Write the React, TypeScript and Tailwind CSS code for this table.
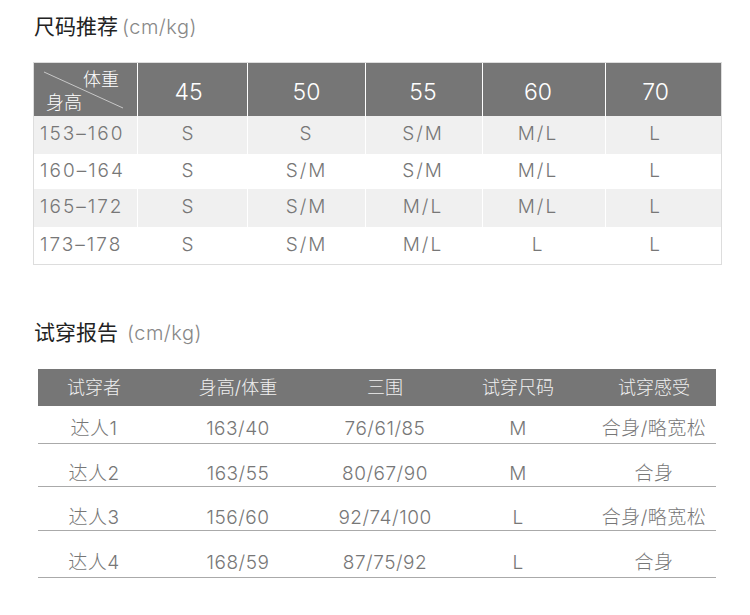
const font = { fontFamily: 'Inter, "Noto Sans CJK SC", sans-serif' };

const weights = ["45", "50", "55", "60", "70"];
// col widths and small right pads so the text sits where the picture has it
const sizeCols = [
  { w: "w-[110px]", pad: "pr-[8px]" },
  { w: "w-[118px]", pad: "" },
  { w: "w-[117px]", pad: "pr-[2px]" },
  { w: "w-[123px]", pad: "pr-[12px]" },
  { w: "w-[116px]", pad: "pr-[16px]" },
];

const sizeRows = [
  { h: "153–160", v: ["S", "S", "S/M", "M/L", "L"], bg: "bg-[#f0f0f0]", height: "h-[38px]" },
  { h: "160–164", v: ["S", "S/M", "S/M", "M/L", "L"], bg: "bg-white", height: "h-[35px]" },
  { h: "165–172", v: ["S", "S/M", "M/L", "M/L", "L"], bg: "bg-[#f0f0f0]", height: "h-[38px]" },
  { h: "173–178", v: ["S", "S/M", "M/L", "L", "L"], bg: "bg-white", height: "h-[37px]" },
];

const reportCols = ["w-[112px]", "w-[176px]", "w-[118px]", "w-[148px]", "w-[124px]"];
const reportHead = ["试穿者", "身高/体重", "三围", "试穿尺码", "试穿感受"];
const reportRows = [
  { v: ["达人1", "163/40", "76/61/85", "M", "合身/略宽松"], row: "h-[38px] pt-[10px]" },
  { v: ["达人2", "163/55", "80/67/90", "M", "合身"], row: "h-[43px] pt-[18px]" },
  { v: ["达人3", "156/60", "92/74/100", "L", "合身/略宽松"], row: "h-[44px] pt-[19px]" },
  { v: ["达人4", "168/59", "87/75/92", "L", "合身"], row: "h-[47px] pt-[18px]" },
];

function Title({ text, gap }: { text: string; gap: string }) {
  return (
    <div className="flex items-baseline">
      <span className="text-[21px] font-normal text-[#222]">{text}</span>
      <span className={`${gap} text-[20px] tracking-[0.5px] text-[#888]`}>(cm/kg)</span>
    </div>
  );
}

function SizeTable() {
  return (
    <div className="mt-[19px] ml-[-1px] w-[689px] border border-[#ddd]">
      <div className="flex h-[53px] bg-[#767676] text-white">
        <div className="relative w-[103px] shrink-0">
          <svg className="absolute left-0 top-0" width="103" height="53">
            <line x1="10" y1="9" x2="89" y2="45" stroke="#c8c8c8" strokeWidth="1" />
          </svg>
          <span className="absolute left-[49px] top-[3px] text-[18px]">体重</span>
          <span className="absolute left-[12px] top-[26px] text-[18px]">身高</span>
        </div>
        {weights.map((w, i) => (
          <div
            key={w}
            className={`${sizeCols[i].w} ${sizeCols[i].pad} flex shrink-0 items-center justify-center border-l border-white pt-[6px] text-[23px]`}
          >
            {w}
          </div>
        ))}
      </div>
      {sizeRows.map((r) => (
        <div key={r.h} className={`flex ${r.height} ${r.bg} text-[19px] text-[#777]`}>
          <div className="flex w-[103px] shrink-0 items-center pl-[6px] tracking-[2px]">{r.h}</div>
          {r.v.map((v, i) => (
            <div
              key={i}
              className={`${sizeCols[i].w} ${sizeCols[i].pad} flex shrink-0 items-center justify-center border-l border-white tracking-[2px]`}
            >
              {v}
            </div>
          ))}
        </div>
      ))}
    </div>
  );
}

function ReportTable() {
  return (
    <div className="mt-[21px] ml-[4px] w-[678px]">
      <div className="flex h-[37px] bg-[#767676] text-[18px] text-[#f0f0f0]">
        {reportHead.map((t, i) => (
          <div key={t} className={`${reportCols[i]} flex shrink-0 items-center justify-center`}>
            {t}
          </div>
        ))}
      </div>
      {reportRows.map((r) => (
        <div key={r.v[0]} className={`flex ${r.row} border-b border-[#aaa] text-[19px] tracking-[0.5px] text-[#777]`}>
          {r.v.map((v, i) => (
            <div key={i} className={`${reportCols[i]} flex shrink-0 items-center justify-center`}>
              {v}
            </div>
          ))}
        </div>
      ))}
    </div>
  );
}

export default function App() {
  return (
    <div className="h-[615px] w-[750px] bg-white pl-[34px] pt-[11px] font-light" style={font}>
      <Title text="尺码推荐" gap="ml-[4px]" />
      <SizeTable />
      <div className="mt-[52px]">
        <Title text="试穿报告" gap="ml-[9px]" />
      </div>
      <ReportTable />
    </div>
  );
}
